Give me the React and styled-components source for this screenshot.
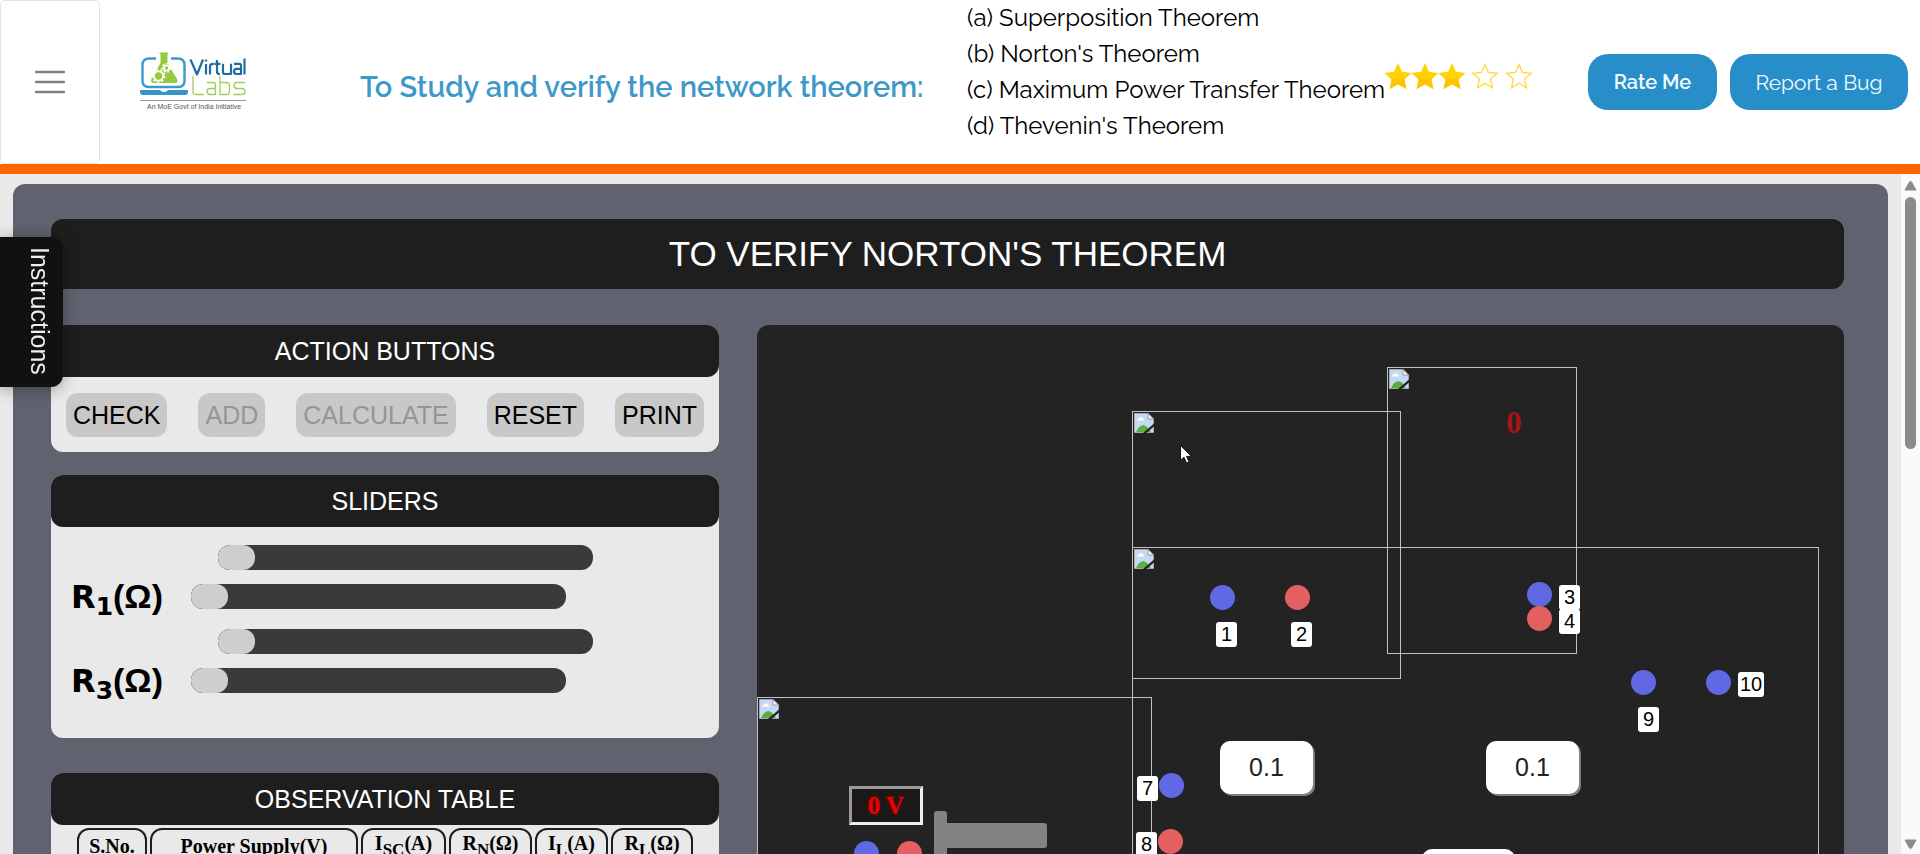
import React from "react";
import styled, { createGlobalStyle } from "styled-components";

const sans = '"Liberation Sans", Arial, sans-serif';
const serif = '"Liberation Serif", "Times New Roman", serif';
const display = 'Raleway, Lato, sans-serif';

const Global = createGlobalStyle`
  *, *::before, *::after { box-sizing: border-box; }
  html, body { margin: 0; height: 100%; overflow: hidden; }
  body { font-family: ${sans}; background: #fff; }
  #root { height: 100%; }
`;

const Page = styled.div`
  height: 100vh;
  display: flex;
  flex-direction: column;
`;

const Header = styled.header`
  flex: none;
  display: flex;
  height: 174px;
  border-bottom: 10px solid #ff6600;
  background: #fff;
  font-family: ${display};
`;

const MenuButton = styled.button`
  width: 100px;
  border: 1px solid #e4e4e4;
  border-radius: 5px;
  background: #fff;
  padding: 0;
  display: flex;
  align-items: center;
  justify-content: center;
`;

const LogoLink = styled.a`
  margin: 50px 0 0 40px;
  width: 108px;
  height: 64px;
`;

const Title = styled.h1`
  margin: 0 0 0 112px;
  width: 607px;
  line-height: 44px;
  padding-top: 65px;
  font-size: 29px;
  font-weight: 600;
  color: #3e98c8;
  white-space: nowrap;
`;

const Theorems = styled.div`
  width: 417px;
  font-size: 24px;
  line-height: 36px;
  color: #000;
  white-space: nowrap;
`;

const Stars = styled.div`
  display: flex;
  padding-top: 63px;
  svg { display: block; }
`;

const StarSlot = styled.span`
  width: ${(p) => (p.$filled ? 27 : 28)}px;
  margin-left: ${(p) => (p.$filled ? 0 : 6)}px;
`;

const HeaderActions = styled.div`
  margin-left: auto;
  padding: 54px 12px 0 0;
  display: flex;
  gap: 13px;
  align-items: flex-start;
`;

const PillButton = styled.button`
  height: 56px;
  width: ${(p) => p.$width}px;
  border: 0;
  border-radius: 20px;
  background: #288ec9;
  color: #f2fbff;
  font-family: ${display};
  font-size: ${(p) => (p.$strong ? 20 : 21)}px;
  font-weight: ${(p) => (p.$strong ? 600 : 400)};
`;

const Body = styled.div`
  flex: 1;
  min-height: 0;
  display: flex;
  background: #e9e9e9;
`;

const Viewport = styled.main`
  flex: 1;
  min-width: 0;
  overflow: hidden;
  padding: 10px 13px 0;
`;

const ScrollTrack = styled.div`
  width: 19px;
  background: #fafafa;
  display: flex;
  flex-direction: column;
  align-items: center;
  padding: 6px 0 4px;
`;

const ScrollThumb = styled.div`
  width: 11px;
  height: 252px;
  margin: 6px 0 auto;
  border-radius: 6px;
  background: #8b8b8b;
`;

const Lab = styled.div`
  min-height: 1000px;
  border-radius: 12px;
  background: #60636f;
  padding: 35px 44px 0 38px;
`;

const Banner = styled.h2`
  margin: 0 0 36px;
  height: 70px;
  line-height: 70px;
  border-radius: 12px;
  background: #1e1e1e;
  color: #fff;
  font-size: 35px;
  font-weight: 400;
  text-align: center;
`;

const Columns = styled.div`
  display: grid;
  grid-template-columns: 668px 1fr;
  gap: 38px;
`;

const Side = styled.div`
  display: flex;
  flex-direction: column;
`;

const Card = styled.section`
  border-radius: 12px;
  background: #e9e9e9;
  margin-bottom: ${(p) => p.$gap}px;
`;

const CardTitle = styled.h3`
  margin: 0;
  height: 52px;
  line-height: 53px;
  border-radius: 12px;
  background: #1e1e1e;
  color: #fff;
  font-size: 25px;
  font-weight: 400;
  text-align: center;
`;

const ButtonRow = styled.div`
  display: flex;
  justify-content: center;
  gap: 31px;
  padding: 16px 0 15px;
`;

const ActionButton = styled.button`
  height: 44px;
  padding: 0 7px;
  border: 0;
  border-radius: 12px;
  background: #c8c8c8;
  color: #000;
  font-family: ${sans};
  font-size: 25px;
  line-height: 28px;
  &:disabled { color: #959595; }
`;

const SliderList = styled.div`
  padding: 18px 21px 45px 20px;
`;

const SliderPair = styled.div`
  display: grid;
  grid-template-columns: 120px 1fr;
  row-gap: 14px;
  align-items: center;
  & + & { margin-top: 20px; }
`;

const SliderLabel = styled.label`
  grid-column: 1;
  height: 25px;
  line-height: 25px;
  font-family: "Arial Black", "DejaVu Sans", sans-serif;
  font-size: 32px;
  font-weight: 700;
  color: #000;
  white-space: nowrap;
  sub { font-size: 25px; line-height: 0; }
`;

const Unit = styled.span`
  font-family: ${sans};
  font-size: 34px;
`;

const Slider = styled.input`
  appearance: none;
  grid-column: 2;
  margin: 0 0 0 ${(p) => (p.$shifted ? 27 : 0)}px;
  width: 375px;
  height: 25px;
  border-radius: 12px;
  background: #3a3a3a;
  overflow: hidden;
  &::-webkit-slider-thumb {
    appearance: none;
    width: 37px;
    height: 25px;
    border-radius: 12px;
    background: #cecece;
  }
`;

const Observations = styled.table`
  margin: 0 auto;
  border-collapse: separate;
  border-spacing: 3px;
  font-family: ${serif};
  font-size: 20px;
  color: #000;
  th {
    height: 36px;
    padding: 0;
    border: 2px solid #1e1e1e;
    border-radius: 12px;
    font-weight: 700;
  }
  sub { font-size: 17px; }
`;

const Bench = styled.div`
  position: relative;
  min-height: 700px;
  border-radius: 12px;
  background: #232323;
  overflow: hidden;
`;

const placed = (p) => `left: ${p.$x}px; top: ${p.$y}px;`;

const Frame = styled.div`
  position: absolute;
  ${placed}
  width: ${(p) => p.$w}px;
  height: ${(p) => p.$h}px;
  border: 1px solid #c0c0c0;
  svg { display: block; margin: 1px; }
`;

const Terminal = styled.span`
  position: absolute;
  ${placed}
  width: 25px;
  height: 25px;
  border-radius: 50%;
  background: ${(p) => (p.$red ? "#e46060" : "#6068e4")};
`;

const Tag = styled.span`
  position: absolute;
  ${placed}
  height: 25px;
  padding: 0 ${(p) => (p.$wide ? 2 : 5)}px;
  border-radius: 3px;
  background: #fff;
  color: #000;
  font-size: 20px;
  line-height: 25px;
`;

const Resistance = styled.output`
  position: absolute;
  ${placed}
  width: 93px;
  height: 53px;
  border-radius: 10px;
  background: #fff;
  box-shadow: 2px 2px 0 #808080;
  color: #222;
  font-size: 25px;
  line-height: 53px;
  text-align: center;
`;

const MeterValue = styled.output`
  position: absolute;
  ${placed}
  color: #a81414;
  font: 700 31px/34px ${serif};
`;

const Voltage = styled.output`
  position: absolute;
  ${placed}
  width: 74px;
  height: 39px;
  border: 3px solid;
  border-color: #9a9a9a #f0f0f0 #f0f0f0 #9a9a9a;
  background: #1c1818;
  color: #f00000;
  text-shadow: 0 0 3px #a00000;
  font: 700 25px/34px ${serif};
  text-align: center;
`;

const Bar = styled.div`
  position: absolute;
  ${placed}
  width: ${(p) => p.$w}px;
  height: ${(p) => p.$h}px;
  border-radius: 3px;
  background: #828282;
`;

const Cursor = styled.svg`
  position: absolute;
  ${placed}
`;

const InstructionsTab = styled.button`
  position: fixed;
  left: 0;
  top: 237px;
  width: 63px;
  height: 150px;
  padding: 4px 0 0 16px;
  border: 0;
  border-radius: 0 12px 12px 0;
  background: #111;
  box-shadow: 0 2px 16px rgba(0, 0, 0, 0.35);
  color: #eee;
  font-family: ${sans};
  font-size: 25px;
  span { writing-mode: vertical-rl; line-height: 28px; }
`;

const starPath = "M14 0L17.9 8.8 27.6 9.9 20.4 16.4 22.4 26 14 21.2 5.6 26 7.6 16.4 .4 9.9 10.1 8.8Z";

const Star = ({ filled }) => (
  <StarSlot $filled={filled}>
    <svg width="28" height="27" viewBox="0 0 28 27" aria-hidden="true">
      {filled ? (
        <>
          <path d={starPath} fill="#ffd200" />
          <path d="M6.4 15.300L7.600 16.400 5.600 26 14 21.200 22.400 26 20.400 16.400 21.600 15.300Z" fill="#ffc400" />
        </>
      ) : (
        <path d="M14 1.500L17.400 9.400 26.300 10.300 19.600 16 21.500 24.800 14 20.300 6.500 24.800 8.400 16 1.700 10.300 10.600 9.400Z" fill="#fff" stroke="#ffd83a" strokeWidth="1.300" />
      )}
    </svg>
  </StarSlot>
);

const Gear = ({ cx, cy, r, teeth }) => (
  <g>
    <circle cx={cx} cy={cy} r={r} fill="#97cb3d" stroke="#fff" strokeWidth="1.900" />
    <circle cx={cx} cy={cy} r={r + 1.6} fill="none" stroke="#fff" strokeWidth="1.600"
      strokeDasharray={`${(Math.PI * (r + 1.6)) / teeth} ${(Math.PI * (r + 1.6)) / teeth}`} />
  </g>
);

const Logo = () => (
  <svg width="108" height="64" viewBox="0 0 108 64" role="img" aria-label="Virtual Labs">
    <path d="M16 8.500H9.500Q2.500 8.500 2.500 15V31Q2.500 37 9 37H38Q44.500 37 44.500 31V15Q44.500 8.500 37.500 8.500H31" fill="none" stroke="#3e98cc" strokeWidth="2.400" />
    <path d="M0 40H20Q21 42 24 42T28 40H48V42Q48 45 45 45H3Q0 45 0 42Z" fill="#3495c8" />
    <path d="M19.500 2.500H28V4H27.500V13L37 29Q38.500 33 35 33H14Q10 33 11.500 28.500L20.500 13V4H19.500Z" fill="#97cb3d" />
    <Gear cx={18.5} cy={26} r={4.6} teeth={9} />
    <Gear cx={26.5} cy={18} r={2.6} teeth={7} />
    <g fill="none" strokeLinejoin="round">
      <path d="M50.500 9.500L57 24.500 63 9.500M66 14V24.500M66 9.500V11.500M70 24.500V16Q70 13.800 74 13.800M77 10V22Q77 24 80 24M74.500 13.800H80.500M83 13.800V22Q83 24 85 24H91V13.800M94 13.800H99.500Q101 13.800 101 16V24H96.500Q94 24 94 21.500T96.500 18.800H101M104.500 8.500V24.500" stroke="#1d6e9f" strokeWidth="2.200" />
      <path d="M53 26V42Q53 44.500 56 44.500H64M67 32.500H73Q75.500 32.500 75.500 35V44.500H70Q67 44.500 67 41.500T70 38.500H75.500M80 26V44.500H86.500Q89.500 44.500 89.500 41V36Q89.500 32.500 86 32.500H80M105 32.500H97Q94 32.500 94 35.500T97 38.500H102Q105 38.500 105 41.500T102 44.500H93.500" stroke="#9fce58" strokeWidth="1.300" />
    </g>
    <path d="M0 50.500H106" stroke="#999" strokeWidth="1" />
    <text x="7" y="59" fontFamily="Liberation Sans, sans-serif" fontSize="7" fill="#555">An MoE Govt of India Initiative</text>
  </svg>
);

const BrokenImage = () => (
  <svg width="20" height="20" viewBox="0 0 20 20" aria-hidden="true">
    <path d="M.5.5H14L19.500 6V19.500H.5Z" fill="#c5d8f5" stroke="#a9a9a9" />
    <path d="M3 7.500Q3 5.500 5 5.500 6 3.500 8 4.500 9 6 10 6.500V7.500Z" fill="#fff" />
    <path d="M2 19Q5 12.500 9.500 12 13 12.500 17 19Z" fill="#5aad3e" />
    <path d="M14 .5V6H19.500Z" fill="#fff" stroke="#999" />
    <path d="M20 10.500L9 20H12.500L20 13.500Z" fill="#232323" />
  </svg>
);

const Arrow = ({ down }) => (
  <svg width="13" height="11" viewBox="0 0 13 11" aria-hidden="true">
    <path d={down ? "M1 1H12L7.500 9Q6.500 10.500 5.500 9Z" : "M1 10H12L7.500 2Q6.500.5 5.500 2Z"} fill="#8b8b8b" stroke="#8b8b8b" strokeLinejoin="round" />
  </svg>
);

const terminals = [
  [453, 260], [528, 260, true], [770, 257], [770, 281, true], [874, 345], [949, 345],
  [402, 448], [401, 504, true], [97, 516], [140, 516, true],
];
const tags = [
  ["1", 459, 297], ["2", 534, 297], ["3", 802, 260], ["4", 802, 284], ["9", 881, 382],
  ["10", 981, 347], ["7", 380, 451], ["8", 379, 507],
];
const frames = [
  [375, 86, 269, 268], [630, 42, 190, 287], [375, 222, 687, 360], [0, 372, 395, 200],
];
const columns = [
  [70, "S.No."], [208, "Power Supply(V)"], [85, "I", "SC", "(A)"], [83, "R", "N", "(Ω)"],
  [73, "I", "L", "(A)"], [82, "R", "L", "(Ω)"],
];

export default function App() {
  return (
    <Page>
      <Global />
      <Header>
        <MenuButton aria-label="Menu">
          <svg width="30" height="24" viewBox="0 0 30 24" stroke="#808080" strokeWidth="2.400" strokeLinecap="round">
            <path d="M1 2H29M1 12H29M1 22H29" />
          </svg>
        </MenuButton>
        <LogoLink href="#"><Logo /></LogoLink>
        <Title>To Study and verify the network theorem:</Title>
        <Theorems>
          <div>(a) Superposition Theorem</div>
          <div>(b) Norton's Theorem</div>
          <div>(c) Maximum Power Transfer Theorem</div>
          <div>(d) Thevenin's Theorem</div>
        </Theorems>
        <Stars>
          <Star filled /><Star filled /><Star filled /><Star /><Star />
        </Stars>
        <HeaderActions>
          <PillButton $width={129} $strong>Rate Me</PillButton>
          <PillButton $width={178}>Report a Bug</PillButton>
        </HeaderActions>
      </Header>
      <Body>
        <Viewport>
          <Lab>
            <Banner>TO VERIFY NORTON'S THEOREM</Banner>
            <Columns>
              <Side>
                <Card $gap={23}>
                  <CardTitle>ACTION BUTTONS</CardTitle>
                  <ButtonRow>
                    <ActionButton>CHECK</ActionButton>
                    <ActionButton disabled>ADD</ActionButton>
                    <ActionButton disabled>CALCULATE</ActionButton>
                    <ActionButton>RESET</ActionButton>
                    <ActionButton>PRINT</ActionButton>
                  </ButtonRow>
                </Card>
                <Card $gap={35}>
                  <CardTitle>SLIDERS</CardTitle>
                  <SliderList>
                    {["1", "3"].map((n) => (
                      <SliderPair key={n}>
                        <Slider type="range" defaultValue="0" $shifted aria-label={`Coarse R${n}`} />
                        <SliderLabel htmlFor={`r${n}`}>R<sub>{n}</sub><Unit>(Ω)</Unit></SliderLabel>
                        <Slider id={`r${n}`} type="range" defaultValue="0" />
                      </SliderPair>
                    ))}
                  </SliderList>
                </Card>
                <Card $gap={0}>
                  <CardTitle>OBSERVATION TABLE</CardTitle>
                  <Observations>
                    <thead>
                      <tr>
                        {columns.map(([width, name, sub, unit]) => (
                          <th key={name + sub} width={width}>{name}{sub && <sub>{sub}</sub>}{unit}</th>
                        ))}
                      </tr>
                    </thead>
                  </Observations>
                </Card>
              </Side>
              <Bench>
                {frames.map(([x, y, w, h]) => (
                  <Frame key={`${x}-${y}`} $x={x} $y={y} $w={w} $h={h}><BrokenImage /></Frame>
                ))}
                <MeterValue $x={749} $y={81}>0</MeterValue>
                <Voltage $x={92} $y={461}>0 V</Voltage>
                <Bar $x={177} $y={486} $w={13} $h={80} />
                <Bar $x={187} $y={498} $w={103} $h={25} />
                {terminals.map(([x, y, red]) => (
                  <Terminal key={`${x}-${y}`} $x={x} $y={y} $red={red} />
                ))}
                {tags.map(([n, x, y]) => (
                  <Tag key={n} $x={x} $y={y} $wide={n.length > 1}>{n}</Tag>
                ))}
                <Resistance $x={463} $y={416}>0.1</Resistance>
                <Resistance $x={729} $y={416}>0.1</Resistance>
                <Resistance $x={665} $y={524}>0.1</Resistance>
                <Cursor $x={423} $y={120} width="12" height="19" viewBox="0 0 12 19" aria-hidden="true">
                  <path d="M.5.5V15.500L4 12.200 6.500 18 9 17 6.600 11.400H11.500Z" fill="#fff" stroke="#15152a" />
                </Cursor>
              </Bench>
            </Columns>
          </Lab>
        </Viewport>
        <ScrollTrack>
          <Arrow />
          <ScrollThumb />
          <Arrow down />
        </ScrollTrack>
      </Body>
      <InstructionsTab><span>Instructions</span></InstructionsTab>
    </Page>
  );
}
